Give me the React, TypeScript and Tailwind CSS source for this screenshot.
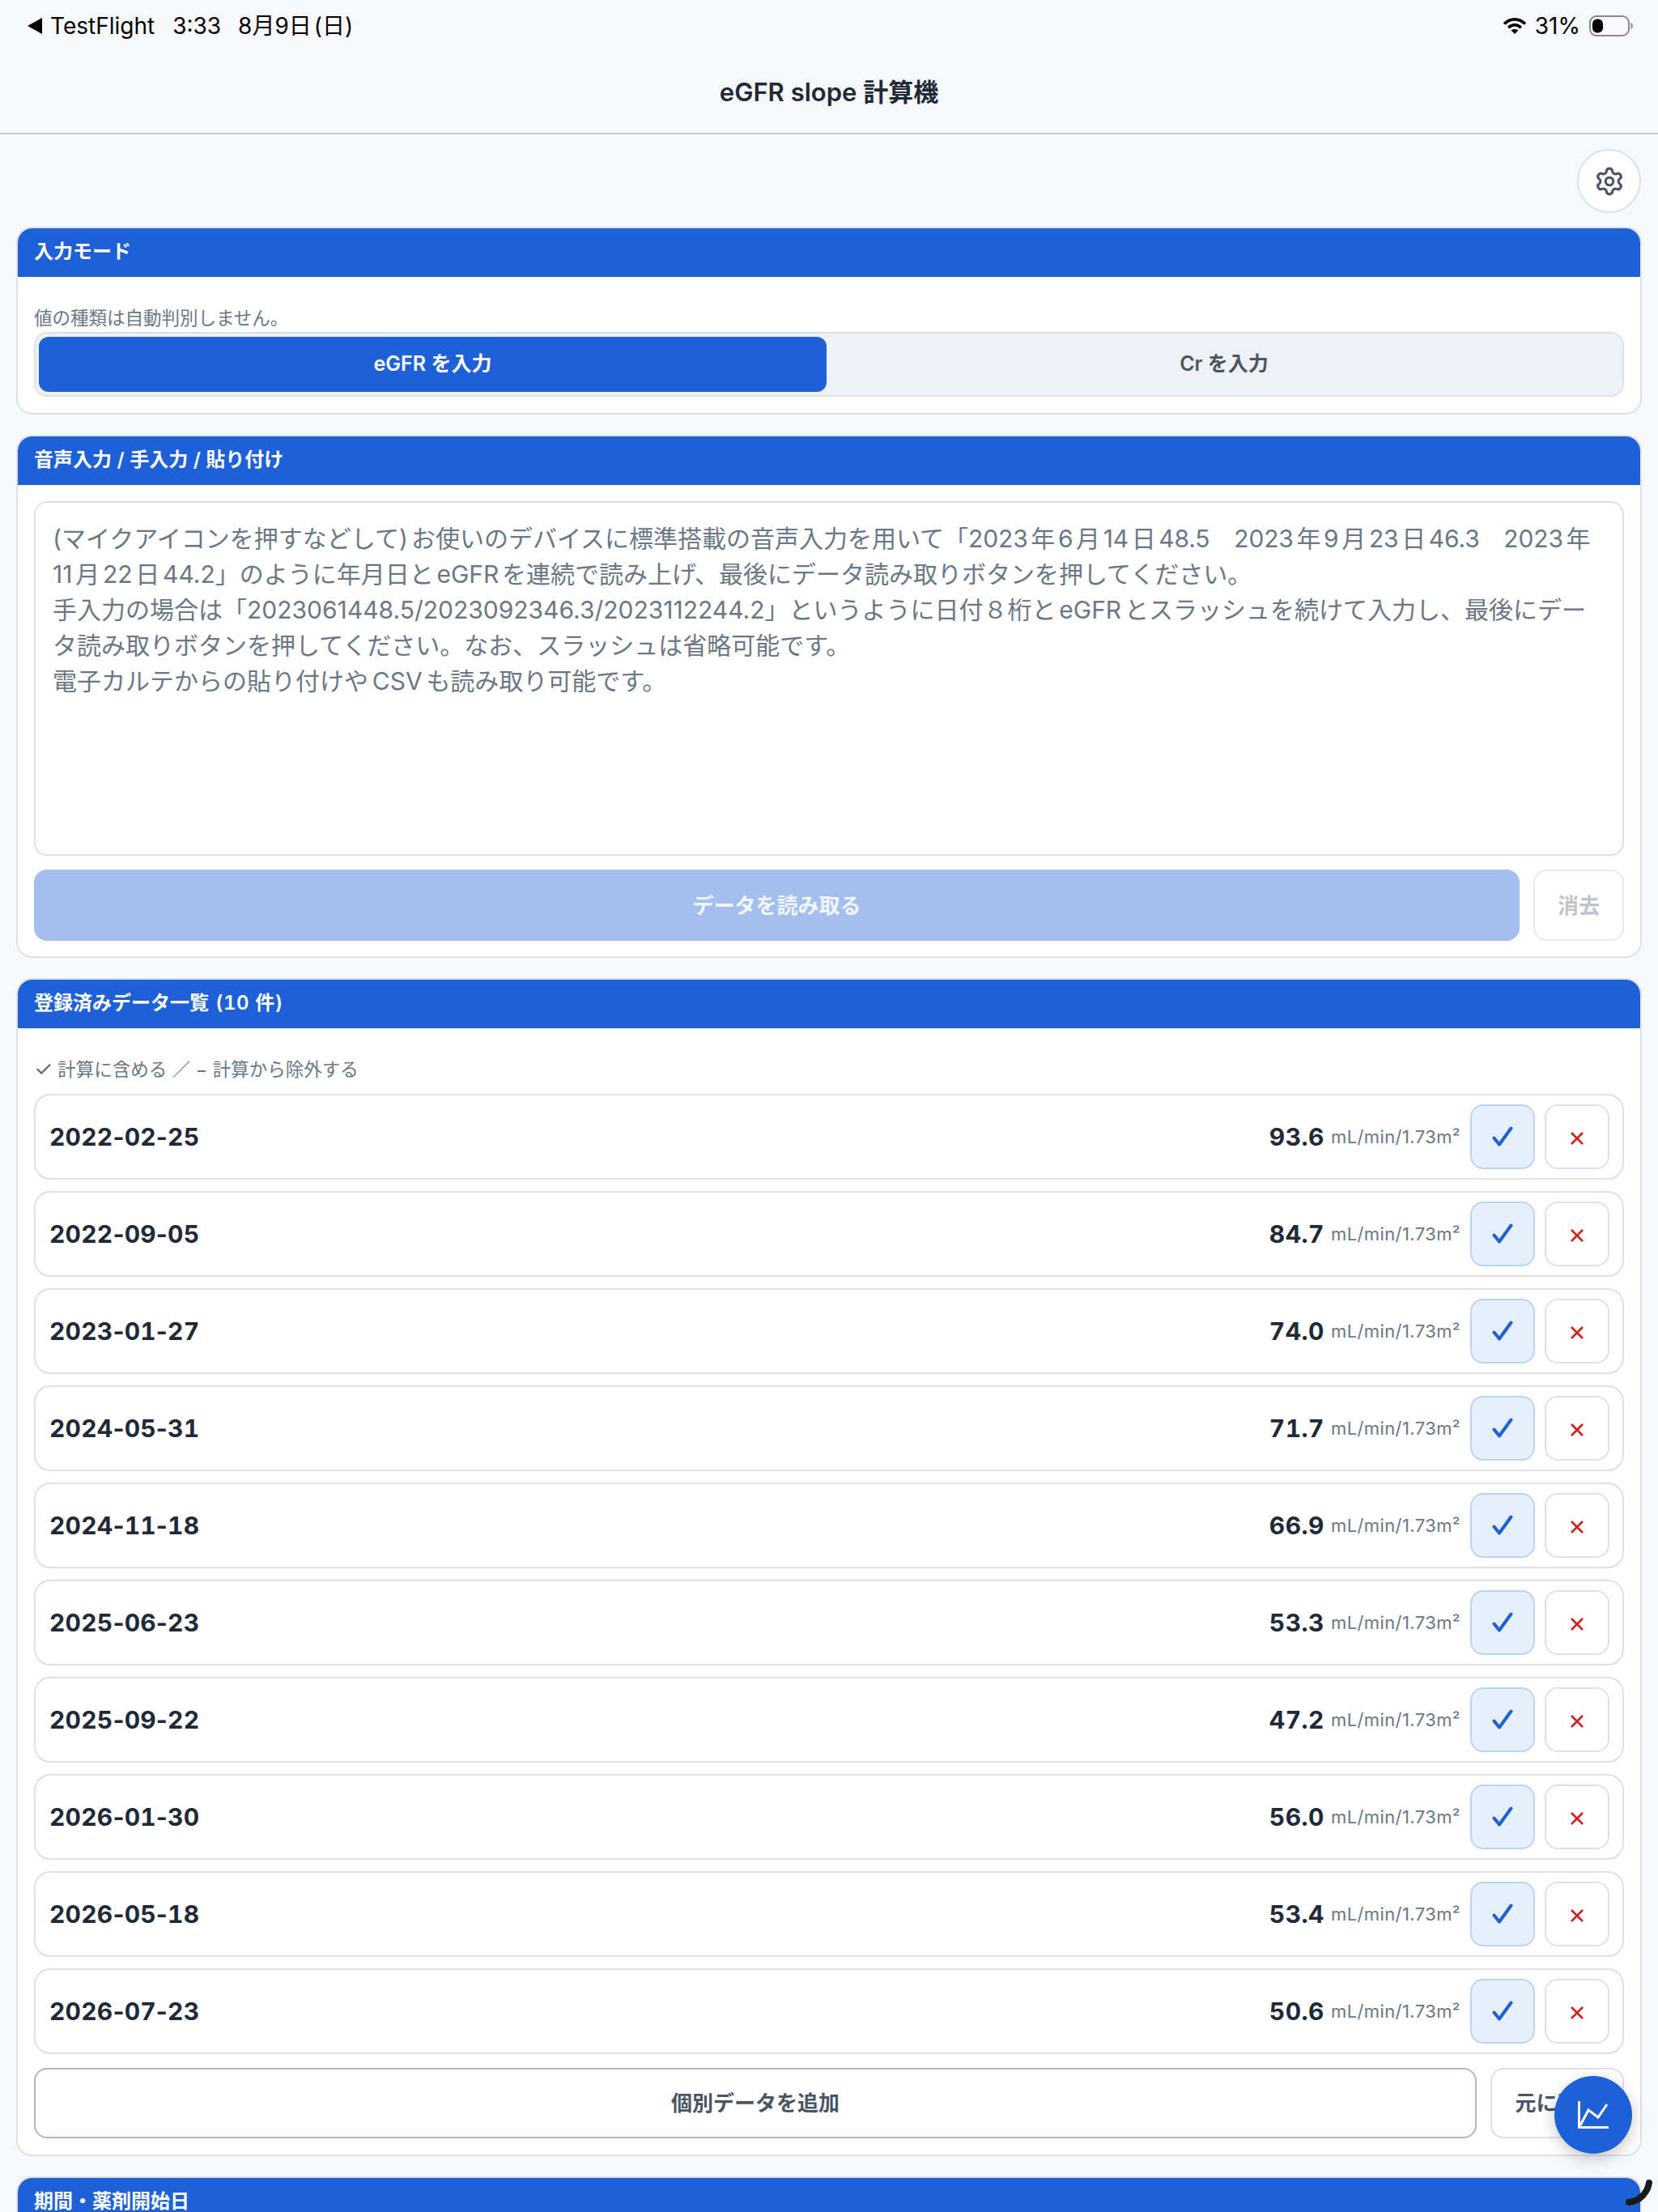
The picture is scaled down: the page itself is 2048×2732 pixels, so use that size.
import { Fragment, type ReactNode } from "react";
import { Settings } from "lucide-react";

const ROWS = [
  { date: "2022-02-25", value: "93.6" },
  { date: "2022-09-05", value: "84.7" },
  { date: "2023-01-27", value: "74.0" },
  { date: "2024-05-31", value: "71.7" },
  { date: "2024-11-18", value: "66.9" },
  { date: "2025-06-23", value: "53.3" },
  { date: "2025-09-22", value: "47.2" },
  { date: "2026-01-30", value: "56.0" },
  { date: "2026-05-18", value: "53.4" },
  { date: "2026-07-23", value: "50.6" },
];

function StatusBar() {
  return (
    <div className="flex h-16 items-center justify-between pl-[34px] pr-[30px] text-[28px] text-black [text-autospace:no-autospace]">
      <div className="flex items-center">
        <svg width="18" height="20" viewBox="0 0 18 20" className="mr-[10px]">
          <path d="M18 0V20L0 10Z" fill="#000" />
        </svg>
        <span>TestFlight</span>
        <span className="ml-[22px]">3:33</span>
        <span className="ml-[21px]">
          8月9日<span className="ml-[3px]">(日)</span>
        </span>
      </div>
      <div className="flex items-center">
        <svg width="30" height="20" viewBox="0 0 30 20" className="mr-[10px]">
          <path d="M2 7.5C10 0 20 0 28 7.5" fill="none" stroke="#000" strokeWidth="3.6" />
          <path d="M7.2 12.2C12 7.8 18 7.8 22.8 12.2" fill="none" stroke="#000" strokeWidth="3.6" />
          <path d="M15 20L10.6 15.6C13 13.6 17 13.6 19.4 15.6Z" fill="#000" />
        </svg>
        <span>31%</span>
        <svg width="55" height="26" viewBox="0 0 55 26" className="ml-[11px]">
          <rect x="1" y="1" width="48" height="24" rx="8" fill="none" stroke="#8a8a8e" strokeWidth="2" />
          <rect x="4" y="4.5" width="13" height="17" rx="6" fill="#000" />
          <path d="M51.5 9C54.5 10 54.5 16 51.5 17Z" fill="#8a8a8e" />
        </svg>
      </div>
    </div>
  );
}

function Card({ title, children }: { title: ReactNode; children?: ReactNode }) {
  return (
    <section className="overflow-hidden rounded-[20px] border-2 border-[#dde2e9] bg-white">
      <h2 className="flex h-[60px] items-center whitespace-pre bg-[#1e60d8] px-5 pb-[3px] text-[24px] font-semibold text-white [word-spacing:0.5px]">
        {title}
      </h2>
      {children}
    </section>
  );
}

function DataRow({ date, value }: { date: string; value: string }) {
  return (
    <div className="flex h-[106px] items-center rounded-[20px] border-2 border-[#dde2e9] bg-white pl-[17px] pr-4">
      <span className="text-[30px] font-bold tracking-[0.2px] text-[#1f2937]">
        {date.split("-").map((part, i) => (
          <Fragment key={i}>
            {i > 0 && "-"}
            <span className="tabular-nums">{part}</span>
          </Fragment>
        ))}
      </span>
      <span className="ml-auto text-[30px] font-bold tabular-nums tracking-[0.5px] text-[#1f2937]">{value}</span>
      <span className="ml-2 text-[22px] tracking-[0.4px] text-[#6b7785]">mL/min/1.73m²</span>
      <button className="ml-3 flex h-20 w-20 items-center justify-center rounded-[16px] border-2 border-[#bcd3f6] bg-[#e7effc]">
        <svg width="26" height="26" viewBox="0 0 26 26">
          <path d="M2.5 14.5L9 22.5L23.5 2.5" fill="none" stroke="#1e60d8" strokeWidth="4" strokeLinecap="round" strokeLinejoin="round" />
        </svg>
      </button>
      <button className="ml-3 flex h-20 w-20 items-center justify-center rounded-[16px] border-2 border-[#dde2e9] bg-white pt-1">
        <svg width="16" height="16" viewBox="0 0 16 16">
          <path d="M1 1L15 15M15 1L1 15" fill="none" stroke="#cc2222" strokeWidth="2.6" />
        </svg>
      </button>
    </div>
  );
}

export default function App() {
  return (
    <div className="relative h-[2732px] w-[2048px] overflow-hidden bg-[#f6f8fb] font-['Inter','Noto_Sans_CJK_JP',sans-serif] [text-autospace:normal]">
      <header className="flex h-[166px] flex-col border-b-2 border-[#c8cbd0]">
        <StatusBar />
        <div className="flex flex-1 items-center justify-center text-[31px] font-semibold text-[#1f2937]">
          eGFR slope 計算機
        </div>
      </header>

      <main className="px-5">
        <div className="flex justify-end pr-[1px] pt-[18px]">
          <button className="flex h-[79px] w-[79px] items-center justify-center rounded-full border-2 border-[#dde2e9] bg-white">
            <Settings className="h-[38px] w-[38px] text-[#4b5563]" strokeWidth={2} />
          </button>
        </div>

        <div className="mt-[17px] flex flex-col gap-[25px]">
          <Card title="入力モード">
            <div className="px-5 pb-5 pt-9">
              <p className="h-8 text-[22.5px] leading-[30px] text-[#6b7785]">値の種類は自動判別しません。</p>
              <div className="flex h-20 rounded-[16px] border-2 border-[#dde2e9] bg-[#eef1f6] p-1">
                <button className="w-[973px] rounded-[12px] bg-[#1e60d8] text-[25px] font-semibold text-white">eGFR を入力</button>
                <button className="ml-[3px] flex-1 rounded-[12px] text-[25px] font-semibold text-[#4b5563]">Cr を入力</button>
              </div>
            </div>
          </Card>

          <Card title="音声入力 / 手入力 / 貼り付け">
            <div className="px-5 pb-[19px] pt-5">
              <div className="h-[438px] whitespace-nowrap rounded-[16px] border-2 border-[#dde2e9] px-[21px] py-[22px] text-[30px] leading-[44px] text-[#6b7785]">
                (マイクアイコンを押すなどして)<span className="ml-[4px]">お使いのデバイスに標準搭載の音声入力を用いて「</span>
                <span className="tracking-[-0.15px]">2023年6月14日48.5　2023年9月23日46.3　2023年</span>
                <br />
                11月22日44.2」のように年月日とeGFRを連続で読み上げ、最後にデータ読み取りボタンを押してください。<br />
                手入力の場合は「2023061448.5/2023092346.3/2023112244.2」というように日付８桁とeGFRとスラッシュを続けて入力し、最後にデー<br />
                タ読み取りボタンを押してください。なお、スラッシュは省略可能です。<br />
                電子カルテからの貼り付けや<span className="mx-[1px]">CSV</span>も読み取り可能です。
              </div>
              <div className="mt-[17px] flex h-[88px] gap-[17px]">
                <button className="flex-1 rounded-[16px] bg-[#a4bfed] text-[26px] font-semibold text-white/85">データを読み取る</button>
                <button className="w-28 rounded-[16px] border-2 border-[#e6e9ee] bg-white text-[26px] font-semibold text-[#bfc4cb]">消去</button>
              </div>
            </div>
          </Card>

          <Card
            title={
              <>
                登録済みデータ一覧<span className="ml-[1px] tabular-nums tracking-[0.4px]"> (10 件)</span>
              </>
            }
          >
            <div className="px-5 pb-5 pt-9">
              <p className="h-[45px] text-[22.5px] leading-[30px] text-[#6b7785]">
                <span className="text-[26px] leading-none text-[#5b6673]">✓</span> 計算に含める ／ − 計算から除外する
              </p>
              <div className="flex flex-col gap-[14px]">
                {ROWS.map((row) => (
                  <DataRow key={row.date} date={row.date} value={row.value} />
                ))}
              </div>
              <div className="mt-[17px] flex h-[87px] gap-[17px]">
                <button className="flex-1 rounded-[16px] border-2 border-[#adb7c6] bg-white text-[26px] font-semibold text-[#4b5563]">個別データを追加</button>
                <button className="w-[165px] rounded-[16px] border-2 border-[#dde2e9] bg-white text-[26px] font-semibold text-[#4b5563]">元に戻す</button>
              </div>
            </div>
          </Card>

          <Card title="期間・薬剤開始日" />
        </div>
      </main>

      {/* floating chart button */}
      <button className="absolute left-[1920px] top-[2564px] flex h-24 w-24 items-center justify-center rounded-full bg-[#1e60d8] shadow-[0_6px_20px_rgba(0,0,0,0.22)]">
        <svg width="38" height="34" viewBox="0 0 38 34">
          <path d="M1.5 0V32.5H38" fill="none" stroke="#fff" strokeWidth="3" />
          <path d="M3 30L13 11L25 20L36 4" fill="none" stroke="#fff" strokeWidth="3" />
        </svg>
      </button>

      {/* screen corner gesture mark */}
      <svg width="36" height="34" viewBox="0 0 36 34" className="absolute left-[2006px] top-[2692px]">
        <path d="M31 4C29 17 18 27 6 28" fill="none" stroke="#1a1a1a" strokeWidth="8" strokeLinecap="round" />
      </svg>
    </div>
  );
}
